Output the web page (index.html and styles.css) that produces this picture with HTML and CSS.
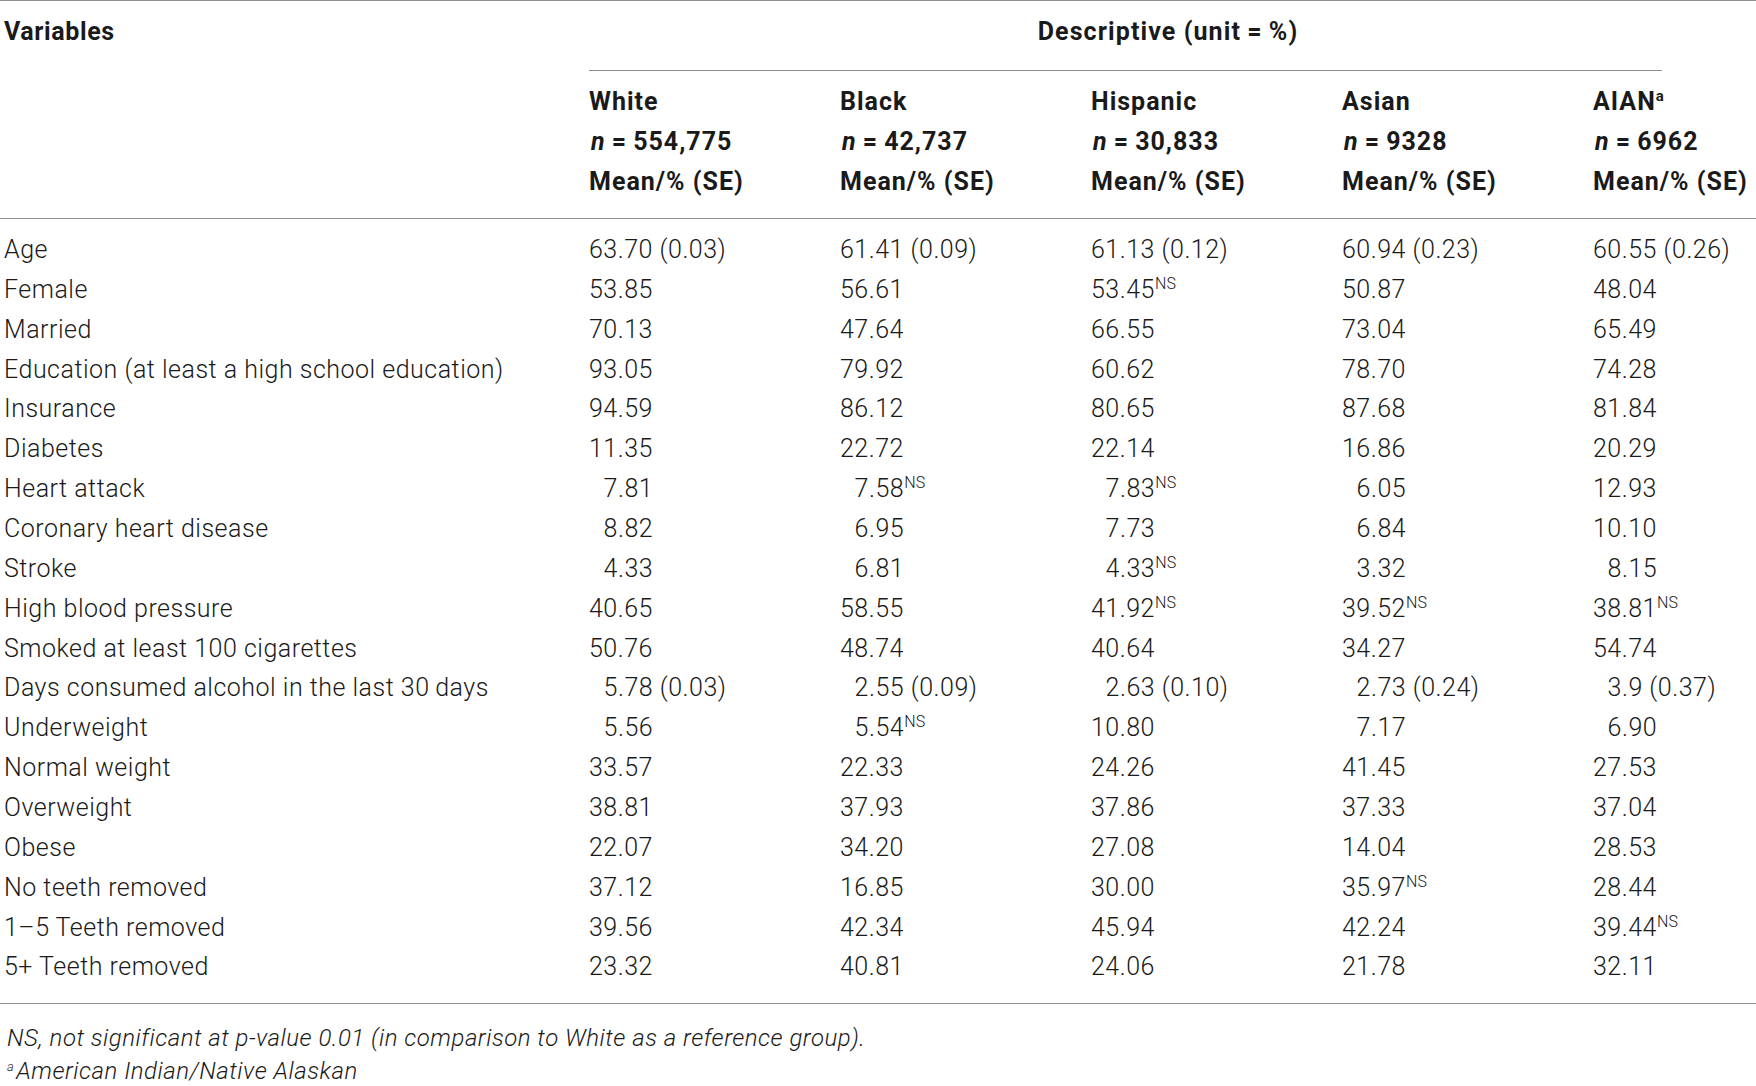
FILE: index.html
```html
<!DOCTYPE html>
<html lang="en">
<head>
<meta charset="utf-8">
<title>Descriptive statistics</title>
<link rel="stylesheet" href="styles.css">
</head>
<body>
<table class="tbl">
  <colgroup>
    <col class="c-var"><col class="c-num"><col class="c-num"><col class="c-num"><col class="c-num"><col class="c-last">
  </colgroup>
  <thead>
    <tr class="hrow1">
      <th class="var-head" rowspan="2">Variables</th>
      <th class="desc-head" colspan="5"><div class="desc-title">Descriptive (unit&thinsp;=&thinsp;%)</div><div class="desc-rule"></div></th>
    </tr>
    <tr class="hrow2">
      <th class="grp">White<br><i>n</i>&thinsp;=&thinsp;554,775<br>Mean/% (SE)</th>
      <th class="grp">Black<br><i>n</i>&thinsp;=&thinsp;42,737<br>Mean/% (SE)</th>
      <th class="grp">Hispanic<br><i>n</i>&thinsp;=&thinsp;30,833<br>Mean/% (SE)</th>
      <th class="grp">Asian<br><i>n</i>&thinsp;=&thinsp;9328<br>Mean/% (SE)</th>
      <th class="grp">AIAN<sup class="sup-a">a</sup><br><i>n</i>&thinsp;=&thinsp;6962<br>Mean/% (SE)</th>
    </tr>
  </thead>
  <tbody>
    <tr><td>Age</td><td>63.70 (0.03)</td><td>61.41 (0.09)</td><td>61.13 (0.12)</td><td>60.94 (0.23)</td><td>60.55 (0.26)</td></tr>
    <tr><td>Female</td><td>53.85</td><td>56.61</td><td>53.45<sup class="ns">NS</sup></td><td>50.87</td><td>48.04</td></tr>
    <tr><td>Married</td><td>70.13</td><td>47.64</td><td>66.55</td><td>73.04</td><td>65.49</td></tr>
    <tr><td>Education (at least a high school education)</td><td>93.05</td><td>79.92</td><td>60.62</td><td>78.70</td><td>74.28</td></tr>
    <tr><td>Insurance</td><td>94.59</td><td>86.12</td><td>80.65</td><td>87.68</td><td>81.84</td></tr>
    <tr><td>Diabetes</td><td>11.35</td><td>22.72</td><td>22.14</td><td>16.86</td><td>20.29</td></tr>
    <tr><td>Heart attack</td><td class="ind">7.81</td><td class="ind">7.58<sup class="ns">NS</sup></td><td class="ind">7.83<sup class="ns">NS</sup></td><td class="ind">6.05</td><td>12.93</td></tr>
    <tr><td>Coronary heart disease</td><td class="ind">8.82</td><td class="ind">6.95</td><td class="ind">7.73</td><td class="ind">6.84</td><td>10.10</td></tr>
    <tr><td>Stroke</td><td class="ind">4.33</td><td class="ind">6.81</td><td class="ind">4.33<sup class="ns">NS</sup></td><td class="ind">3.32</td><td class="ind">8.15</td></tr>
    <tr><td>High blood pressure</td><td>40.65</td><td>58.55</td><td>41.92<sup class="ns">NS</sup></td><td>39.52<sup class="ns">NS</sup></td><td>38.81<sup class="ns">NS</sup></td></tr>
    <tr><td>Smoked at least 100 cigarettes</td><td>50.76</td><td>48.74</td><td>40.64</td><td>34.27</td><td>54.74</td></tr>
    <tr><td>Days consumed alcohol in the last 30&thinsp;days</td><td class="ind">5.78 (0.03)</td><td class="ind">2.55 (0.09)</td><td class="ind">2.63 (0.10)</td><td class="ind">2.73 (0.24)</td><td class="ind">3.9 (0.37)</td></tr>
    <tr><td>Underweight</td><td class="ind">5.56</td><td class="ind">5.54<sup class="ns">NS</sup></td><td>10.80</td><td class="ind">7.17</td><td class="ind">6.90</td></tr>
    <tr><td>Normal weight</td><td>33.57</td><td>22.33</td><td>24.26</td><td>41.45</td><td>27.53</td></tr>
    <tr><td>Overweight</td><td>38.81</td><td>37.93</td><td>37.86</td><td>37.33</td><td>37.04</td></tr>
    <tr><td>Obese</td><td>22.07</td><td>34.20</td><td>27.08</td><td>14.04</td><td>28.53</td></tr>
    <tr><td>No teeth removed</td><td>37.12</td><td>16.85</td><td>30.00</td><td>35.97<sup class="ns">NS</sup></td><td>28.44</td></tr>
    <tr><td>1–5 Teeth removed</td><td>39.56</td><td>42.34</td><td>45.94</td><td>42.24</td><td>39.44<sup class="ns">NS</sup></td></tr>
    <tr><td>5+ Teeth removed</td><td>23.32</td><td>40.81</td><td>24.06</td><td>21.78</td><td>32.11</td></tr>
  </tbody>
</table>
<div class="notes">
  <p class="note">NS, not significant at p-value 0.01 (in comparison to White as a reference group).</p>
  <p class="note note-last"><sup class="note-sup">a</sup>American Indian/Native Alaskan</p>
</div>
</body>
</html>
```

FILE: styles.css
```css
html, body {
  margin: 0;
  padding: 0;
  overflow: hidden;
  background: #ffffff;
}

body {
  font-family: Roboto, "Liberation Sans", Arial, sans-serif;
  font-weight: 300;
  font-size: 25px;
  letter-spacing: 0.5px;
  color: #1a1a1a;
  width: 1756px;
}

.tbl {
  border-collapse: collapse;
  table-layout: fixed;
  width: 1761px;
  border-top: 1px solid #8f8f8f;
}

.c-var { width: 589px; }
.c-num { width: 251px; }
.c-last { width: 168px; }

.tbl th {
  font-weight: 700;
  letter-spacing: 1px;
  text-align: left;
  padding: 0;
  vertical-align: top;
}

.var-head {
  padding: 11px 0 0 4px !important;
  line-height: 40px;
  letter-spacing: 0.6px !important;
  border-bottom: 1px solid #8f8f8f;
}

.desc-head {
  line-height: 40px;
  padding-top: 11px !important;
}

.desc-title {
  text-align: center;
  padding-right: 14px;
  letter-spacing: 1.1px;
}

.desc-rule {
  margin-top: 18px;
  margin-right: 99px;
  border-top: 1px solid #8f8f8f;
}

.hrow2 th {
  padding: 11px 0 16px 0;
  line-height: 40px;
  border-bottom: 1px solid #8f8f8f;
  white-space: nowrap;
}

.hrow2 th i {
  font-style: italic;
  padding-left: 2px;
}

.sup-a {
  font-size: 15px;
  line-height: 0;
  vertical-align: 9px;
  font-weight: 700;
  letter-spacing: 0;
}

.tbl td {
  padding: 0;
  height: 39.86px;
  line-height: 39.86px;
  white-space: nowrap;
  vertical-align: middle;
}

.tbl tbody tr td:first-child {
  padding-left: 4px;
}

.tbl td.ind {
  padding-left: calc(0.562em + 0.5px);
}

.tbl tbody tr:first-child td {
  padding-top: 11px;
}

.tbl tbody tr:last-child td {
  padding-bottom: 16px;
  border-bottom: 1px solid #8f8f8f;
}

.ns {
  font-size: 16px;
  line-height: 0;
  vertical-align: 9px;
  letter-spacing: 0.3px;
}

.notes {
  padding: 15px 0 0 7px;
}

.note {
  margin: 0;
  font-style: italic;
  font-size: 24px;
  letter-spacing: 0.5px;
  line-height: 38px;
}

.note-last {
  line-height: 24px;
  margin-top: 2px;
}

.note-sup {
  font-size: 13px;
  line-height: 0;
  vertical-align: 8px;
  padding-right: 2px;
}
```
